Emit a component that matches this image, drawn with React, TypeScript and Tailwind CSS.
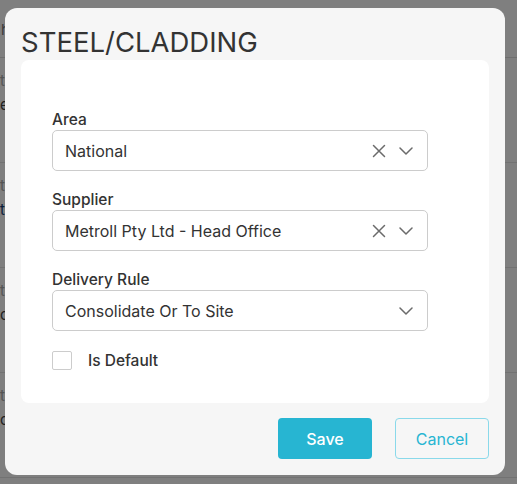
const font = { fontFamily: "Inter, 'Noto Sans', sans-serif" };

function ClearIcon() {
  return (
    <svg width="14" height="14" viewBox="0 0 14 14" className="mr-[13px]">
      <path d="M1.5 1.5 L12.5 12.5 M12.5 1.5 L1.5 12.5" stroke="#6b6b6b" strokeWidth="1.5" fill="none" strokeLinecap="round" />
    </svg>
  );
}

function ChevronIcon() {
  return (
    <svg width="14" height="8" viewBox="0 0 14 8">
      <path d="M1 1 L7 7 L13 1" stroke="#6b6b6b" strokeWidth="1.5" fill="none" strokeLinecap="round" strokeLinejoin="round" />
    </svg>
  );
}

function SelectField({
  label,
  value,
  clearable,
}: {
  label: string;
  value: string;
  clearable?: boolean;
}) {
  return (
    <div className="flex w-[376px] flex-col">
      <label className="mb-[1px] text-[15.5px] font-medium leading-[19px] text-[#333]">{label}</label>
      <div className="flex h-[41px] items-center rounded-[5px] border border-[#cccccc] bg-white pl-[12px] pr-[14px]">
        <span className="flex-1 text-[16px] text-[#333]">{value}</span>
        {clearable ? <ClearIcon /> : null}
        <ChevronIcon />
      </div>
    </div>
  );
}

export default function App() {
  const rows = ["e", "t", "c", "c"];

  return (
    <div className="relative h-[484px] w-[517px] overflow-hidden bg-[#7f7f7f]" style={font}>
      {/* page behind the overlay */}
      <div className="flex flex-col pt-[18px] text-[15px] text-[#3a3a3a]">
        <div className="h-[40px] border-b border-[#6f6f6f] pl-[1px] leading-[24px]">h</div>
        {rows.map((value, index) => (
          <div key={index} className="flex h-[105px] flex-col border-b border-[#727272] pt-[12px]">
            <span className="leading-[22px] text-[#555]">ti</span>
            <span className={index === 1 ? "leading-[26px] text-[#0b1d3a]" : "leading-[26px] text-[#222]"}>{value}</span>
          </div>
        ))}
      </div>

      {/* modal */}
      <div className="absolute left-[5px] top-[8px] flex h-[467px] w-[500px] flex-col rounded-[12px] bg-[#f6f6f6] px-[16px]">
        <h1 className="mt-[17px] text-[27.5px] font-normal leading-[34px] text-[#333]">STEEL/CLADDING</h1>
        <div className="mt-[1px] flex h-[343px] flex-col gap-[19px] rounded-[8px] bg-white px-[31px] pt-[50px]">
          <SelectField label="Area" value="National" clearable />
          <SelectField label="Supplier" value="Metroll Pty Ltd - Head Office" clearable />
          <SelectField label="Delivery Rule" value="Consolidate Or To Site" />
          <label className="-mt-[1px] flex items-center">
            <span className="h-[19px] w-[20px] rounded-[2px] border border-[#cccccc] bg-white" />
            <span className="ml-[16px] text-[15.5px] font-medium text-[#333]">Is Default</span>
          </label>
        </div>
        <div className="mt-[15px] flex justify-end gap-[23px]">
          <button className="h-[41px] w-[94px] rounded-[4px] bg-[#27b5d2] text-[16px] font-medium text-white">
            Save
          </button>
          <button className="h-[41px] w-[94px] rounded-[4px] border border-[#8ad9ea] bg-transparent text-[16px] text-[#27b5d2]">
            Cancel
          </button>
        </div>
      </div>
    </div>
  );
}
